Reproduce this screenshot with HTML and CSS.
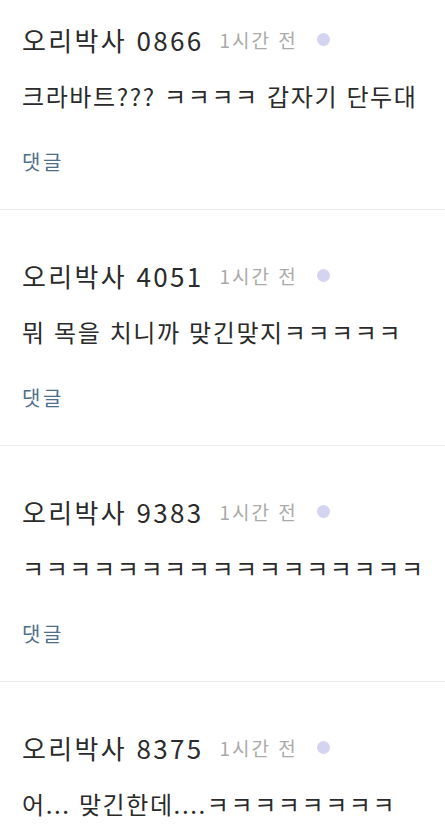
FILE: index.html
```html
<!DOCTYPE html>
<html lang="ko">
<head>
    <meta charset="UTF-8">
    <meta name="viewport" content="width=device-width, initial-scale=1.0">
    <title>댓글</title>
    <link rel="stylesheet" href="styles.css">
</head>
<body>
    <ul class="comment-list">
        <li class="comment">
            <div class="comment-head">
                <span class="author">오리박사 0866</span>
                <span class="time">1시간 전</span>
                <span class="dot"></span>
            </div>
            <p class="comment-text">크라바트??? ㅋㅋㅋㅋ 갑자기 단두대</p>
            <a class="reply" href="#">댓글</a>
        </li>
        <li class="comment">
            <div class="comment-head">
                <span class="author">오리박사 4051</span>
                <span class="time">1시간 전</span>
                <span class="dot"></span>
            </div>
            <p class="comment-text">뭐 목을 치니까 맞긴맞지ㅋㅋㅋㅋㅋ</p>
            <a class="reply" href="#">댓글</a>
        </li>
        <li class="comment">
            <div class="comment-head">
                <span class="author">오리박사 9383</span>
                <span class="time">1시간 전</span>
                <span class="dot"></span>
            </div>
            <p class="comment-text">ㅋㅋㅋㅋㅋㅋㅋㅋㅋㅋㅋㅋㅋㅋㅋㅋㅋ</p>
            <a class="reply" href="#">댓글</a>
        </li>
        <li class="comment">
            <div class="comment-head">
                <span class="author">오리박사 8375</span>
                <span class="time">1시간 전</span>
                <span class="dot"></span>
            </div>
            <p class="comment-text">어... 맞긴한데....ㅋㅋㅋㅋㅋㅋㅋㅋ</p>
            <a class="reply" href="#">댓글</a>
        </li>
    </ul>
</body>
</html>
```

FILE: styles.css
```css
* {
    margin: 0;
    padding: 0;
    box-sizing: border-box;
}

html, body {
    height: 100%;
}

body {
    font-family: "Noto Sans CJK KR", "Noto Sans", sans-serif;
    background-color: #fff;
    color: #2b2b2b;
    overflow: hidden;
}

/* list is scrolled a little, first item top is cut off */
.comment-list {
    list-style: none;
    margin-top: -26px;
}

.comment {
    height: 236px;
    padding: 46px 22px 0;
    border-bottom: 1px solid #ebebeb;
}

.comment-head {
    display: flex;
    align-items: center;
    height: 38px;
}

.author {
    font-size: 26px;
    letter-spacing: 2.3px;
}

.time {
    font-size: 19px;
    letter-spacing: 2px;
    color: #aaa;
    margin-left: 16px;
}

.dot {
    width: 13px;
    height: 13px;
    border-radius: 50%;
    background-color: #d4d4f0;
    margin-left: 19px;
}

.comment-text {
    font-size: 24px;
    letter-spacing: 1.6px;
    line-height: 38px;
    margin-top: 19px;
    white-space: nowrap;
}

.reply {
    display: inline-block;
    font-size: 20px;
    letter-spacing: 2.5px;
    line-height: 30px;
    margin-top: 32px;
    color: #4d6f8c;
    text-decoration: none;
}
```
